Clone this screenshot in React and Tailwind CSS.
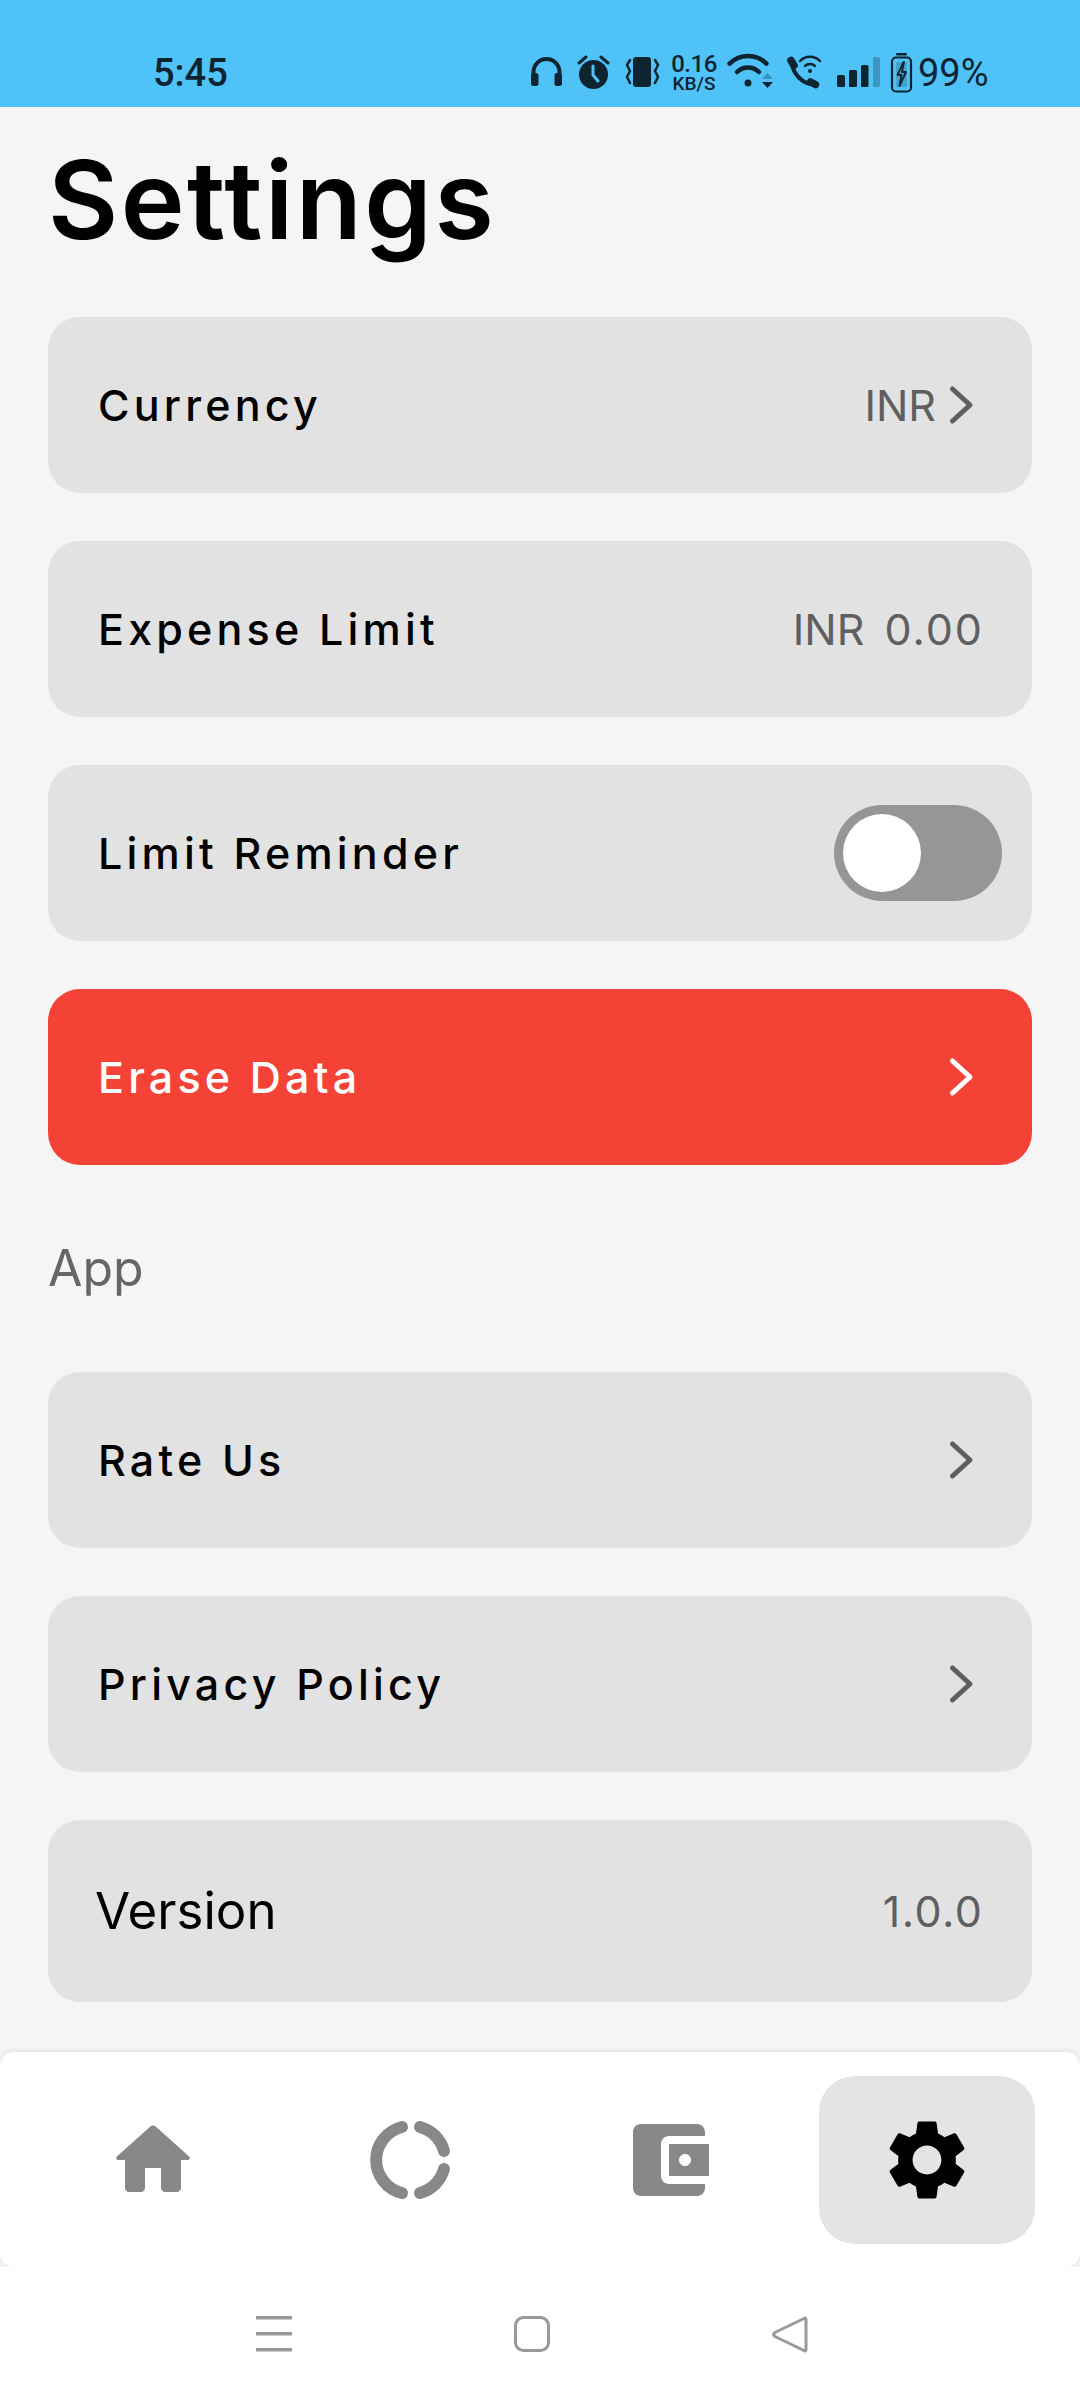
import React from "react";

const FONT = "font-['Inter','Noto_Sans',sans-serif]";

/* ======================
   ICONS
====================== */

// status bar icons are drawn in page pixels, viewBox starts at their page x
function StatusSvg({ x, w, className = "", children }) {
  return (
    <svg width={w} height={48} viewBox={`${x} 48 ${w} 48`} className={`shrink-0 ${className}`} fill="none">
      {children}
    </svg>
  );
}

const INK = "#0e2431";
const SKY = "#4fc3f7";

function StatusIcons() {
  return (
    <div className="flex items-start">
      <StatusSvg x={528} w={38}>
        <path d="M533.500 78V72a13 13 0 0 1 26 0v6" stroke={INK} strokeWidth="4" />
        <rect x="531" y="73" width="7.500" height="13" rx="2.500" fill={INK} />
        <rect x="554.500" y="73" width="7.500" height="13" rx="2.500" fill={INK} />
      </StatusSvg>
      <StatusSvg x={575} w={37} className="ml-[9px]">
        <circle cx="593.500" cy="74.500" r="14.500" fill={INK} />
        <path d="M593 66v9l5 6" stroke={SKY} strokeWidth="3" strokeLinecap="round" strokeLinejoin="round" />
        <path d="M579 63l7-6M601 57l7 6" stroke={INK} strokeWidth="3" strokeLinecap="round" />
      </StatusSvg>
      <StatusSvg x={624} w={37} className="ml-[12px]">
        <rect x="633" y="57" width="18" height="30" rx="3" fill={INK} />
        <path d="M630 60l-3 5 3 6-3 6 3 6M655 60l3 5-3 6 3 6-3 6" stroke={INK} strokeWidth="2.500" strokeLinejoin="round" strokeLinecap="round" />
      </StatusSvg>
      <div className="ml-[9px] w-[48px] flex flex-col items-center font-['Roboto',sans-serif] font-medium text-[#0e2431]">
        <div className="text-[24px] leading-[20px] mt-[6px] tracking-[-0.5px]">0.16</div>
        <div className="text-[19px] leading-[16px] mt-[2px]">KB/S</div>
      </div>
      <StatusSvg x={726} w={50} className="ml-[8px]">
        <path d="M729.600 63.600a26 26 0 0 1 36.800 0" stroke={INK} strokeWidth="4.500" strokeLinecap="round" />
        <path d="M737 72a15.500 15.500 0 0 1 22 0" stroke={INK} strokeWidth="4.500" strokeLinecap="round" />
        <circle cx="748" cy="83" r="3.500" fill={INK} />
        <path d="M762 79l5.500-6 5.500 6z" fill={INK} opacity="0.3" />
        <path d="M762 82l5.500 6 5.500-6z" fill={INK} />
      </StatusSvg>
      <StatusSvg x={786} w={38} className="ml-[10px]">
        <path d="M792 62c0 11 11 23 22 22" stroke={INK} strokeWidth="4" />
        <path d="M791 60.500l3 5M810.500 82l5 2.500" stroke={INK} strokeWidth="7.500" strokeLinecap="round" />
        <path d="M800 61a14 14 0 0 1 20 0" stroke={INK} strokeWidth="2.500" strokeLinecap="round" />
        <path d="M805 66a7 7 0 0 1 10 0" stroke={INK} strokeWidth="2.500" strokeLinecap="round" />
        <circle cx="810" cy="71" r="2" fill={INK} />
      </StatusSvg>
      <StatusSvg x={835} w={47} className="ml-[11px]">
        <rect x="837" y="75" width="8" height="12" rx="1.500" fill={INK} />
        <rect x="849" y="70" width="8" height="17" rx="1.500" fill={INK} />
        <rect x="861" y="65" width="7.500" height="22" rx="1.500" fill={INK} />
        <rect x="873" y="57" width="7" height="30" rx="1.500" fill={INK} opacity="0.28" />
      </StatusSvg>
      <StatusSvg x={889} w={25} className="ml-[7px]">
        <rect x="892" y="57.500" width="19" height="34" rx="4" stroke={INK} strokeWidth="2.200" />
        <rect x="896" y="53" width="11" height="2.500" rx="1" fill={INK} />
        <path d="M896 62h11v25h-11z" fill={INK} opacity="0.2" />
        <path d="M903.500 62l-6 13h4l-2 11 6.500-14h-4l2-10z" stroke={INK} strokeWidth="1.800" strokeLinejoin="round" />
      </StatusSvg>
      <span className="ml-[4px] font-['Roboto',sans-serif] text-[38px] leading-[48px] mt-[1px] text-[#0e2431]">99%</span>
    </div>
  );
}

function Chevron({ color = "#5f5f5f" }) {
  return (
    <svg width="34" height="44" viewBox="0 0 34 44" fill="none" className="shrink-0">
      <path d="M4.500 6l17.500 16L4.500 38" stroke={color} strokeWidth="5" strokeLinecap="round" strokeLinejoin="round" />
    </svg>
  );
}

function NavIcon({ fill = "#888888", children }) {
  return (
    <svg width="96" height="96" viewBox="0 0 24 24" fill={fill}>
      {children}
    </svg>
  );
}

/* ======================
   ROWS
====================== */

function Row({ label, right, className = "bg-[#e2e2e2]", labelClass = "text-black", pr = "pr-[50px]" }) {
  return (
    <div className={`h-[176px] flex items-center justify-between rounded-[32px] pl-[50px] ${pr} ${className}`}>
      <span className={`text-[43px] font-medium tracking-[4.2px] ${labelClass}`}>{label}</span>
      {right}
    </div>
  );
}

function Value({ children }) {
  return <span className="text-[43px] whitespace-nowrap text-[#5f5f5f]">{children}</span>;
}

export default function App() {
  return (
    <div className={`w-[1080px] h-[2400px] flex flex-col bg-white overflow-hidden ${FONT}`}>
      {/* status bar */}
      <div className="h-[107px] shrink-0 bg-[#4fc3f7] flex items-start pt-[48px] pl-[153px]">
        <span className="w-[375px] mt-[1px] font-['Roboto',sans-serif] text-[38px] leading-[48px] font-medium text-[#0e2431]">5:45</span>
        <StatusIcons />
      </div>

      <main className="flex-1 flex flex-col bg-[#f5f5f5]">
        <div className="px-[48px]">
          <h1 className="h-[210px] pt-[29px] text-[108px] leading-[128px] tracking-[2.500px] font-semibold text-black">Settings</h1>

          <div className="flex flex-col gap-[48px]">
            <Row
              label="Currency"
              right={
                <div className="flex items-center gap-[12px]">
                  <Value>INR</Value>
                  <Chevron />
                </div>
              }
            />
            <Row
              label="Expense Limit"
              right={
                <Value>
                  INR&nbsp;<span className="ml-[8px] tracking-[2px] mr-[-2px]">0.00</span>
                </Value>
              }
            />
            <Row
              label="Limit Reminder"
              pr="pr-[30px]"
              right={
                <div className="w-[168px] h-[96px] rounded-full bg-[#969696] p-[9px]">
                  <div className="w-[78px] h-[78px] rounded-full bg-white" />
                </div>
              }
            />
            <Row label="Erase Data" className="bg-[#f44336]" labelClass="text-white" right={<Chevron color="#ffffff" />} />
          </div>

          <div className="h-[207px] flex items-center text-[50px] text-[#666666]">App</div>

          <div className="flex flex-col gap-[48px]">
            <Row label="Rate Us" right={<Chevron />} />
            <Row label="Privacy Policy" right={<Chevron />} />
            <div className="h-[182px] flex items-center justify-between rounded-[32px] bg-[#e2e2e2] pl-[47px] pr-[50px]">
              <span className="text-[51px] text-black">Version</span>
              <Value>
                <span className="tracking-[1.500px] mr-[-1.500px]">1.0.0</span>
              </Value>
            </div>
          </div>
        </div>

        {/* bottom nav */}
        <nav className="mt-auto h-[215px] bg-white rounded-[14px] shadow-[0_-1px_6px_rgba(0,0,0,0.1)] flex items-start justify-between px-[45px] pt-[24px]">
          <div className="w-[216px] h-[168px] flex items-center justify-center">
            <NavIcon>
              <path d="M10 19v-5h4v5c0 .55.45 1 1 1h3c.55 0 1-.45 1-1v-7h1.700c.46 0 .68-.57.33-.87L12.670 3.600c-.38-.34-.96-.34-1.340 0l-8.360 7.530c-.34.3-.13.87.33.87H5v7c0 .55.45 1 1 1h3c.55 0 1-.45 1-1z" />
            </NavIcon>
          </div>
          <div className="w-[216px] h-[168px] flex items-center justify-center">
            <svg width="88" height="88" viewBox="0 0 88 88" fill="none" stroke="#888888" strokeWidth="12" strokeLinecap="round">
              <path d="M35 11A34 34 0 0 0 35 77" />
              <path d="M53 11A34 34 0 0 1 77 35" />
              <path d="M77 53A34 34 0 0 1 53 77" />
            </svg>
          </div>
          <div className="w-[216px] h-[168px] flex items-center justify-center">
            <NavIcon>
              <path d="M21 18v1c0 1.100-.9 2-2 2H5c-1.110 0-2-.9-2-2V5c0-1.100.89-2 2-2h14c1.100 0 2 .9 2 2v1h-9c-1.110 0-2 .9-2 2v8c0 1.100.89 2 2 2h9zm-9-2h10V8H12v8zm4-2.500c-.83 0-1.500-.67-1.500-1.500s.67-1.500 1.500-1.500 1.500.67 1.500 1.500-.67 1.500-1.500 1.500z" />
            </NavIcon>
          </div>
          <div className="w-[216px] h-[168px] flex items-center justify-center rounded-[36px] bg-[#e4e4e4]">
            <NavIcon fill="#000000">
              <path d="M19.140 12.940c.04-.3.06-.61.06-.94 0-.32-.02-.64-.07-.94l2.030-1.580c.18-.14.23-.41.12-.61l-1.920-3.320c-.12-.22-.37-.29-.59-.22l-2.390.96c-.5-.38-1.030-.7-1.620-.94l-.36-2.540c-.04-.24-.24-.41-.48-.41h-3.840c-.24 0-.43.17-.47.41l-.36 2.540c-.59.24-1.130.57-1.620.94l-2.390-.96c-.22-.08-.47 0-.59.22L2.740 8.870c-.12.21-.08.47.12.61l2.030 1.580c-.05.3-.09.63-.09.94s.02.64.07.94l-2.030 1.580c-.18.14-.23.41-.12.61l1.920 3.320c.12.22.37.29.59.22l2.390-.96c.5.38 1.030.7 1.620.94l.36 2.540c.05.24.24.41.48.41h3.840c.24 0 .44-.17.47-.41l.36-2.540c.59-.24 1.130-.56 1.620-.94l2.390.96c.22.08.47 0 .59-.22l1.920-3.320c.12-.22.07-.47-.12-.61l-2.010-1.580zM12 15.600c-1.980 0-3.600-1.620-3.600-3.600s1.620-3.600 3.600-3.600 3.600 1.620 3.600 3.600-1.620 3.600-3.600 3.600z" />
            </NavIcon>
          </div>
        </nav>
      </main>

      {/* android nav bar */}
      <div className="h-[133px] shrink-0 bg-white flex items-start pt-[49px] pl-[256px]">
        <svg width="36" height="36" viewBox="0 0 36 36" fill="#999999" className="shrink-0">
          <rect x="0" y="0" width="36" height="3.500" />
          <rect x="0" y="16" width="36" height="3.500" />
          <rect x="0" y="32" width="36" height="3.500" />
        </svg>
        <svg width="36" height="36" viewBox="0 0 36 36" fill="none" stroke="#999999" strokeWidth="3" className="ml-[222px] shrink-0">
          <rect x="1.500" y="1.500" width="33" height="33" rx="8" />
        </svg>
        <svg width="36" height="37" viewBox="0 0 36 37" fill="none" stroke="#999999" strokeWidth="3" strokeLinejoin="round" className="ml-[222px] shrink-0">
          <path d="M32 2.500C33 1.500 34 2 34 3.500V33.500C34 35 33 35.500 32 34.500L3 20.500C1 19 1 18 3 16.500Z" />
        </svg>
      </div>
    </div>
  );
}
